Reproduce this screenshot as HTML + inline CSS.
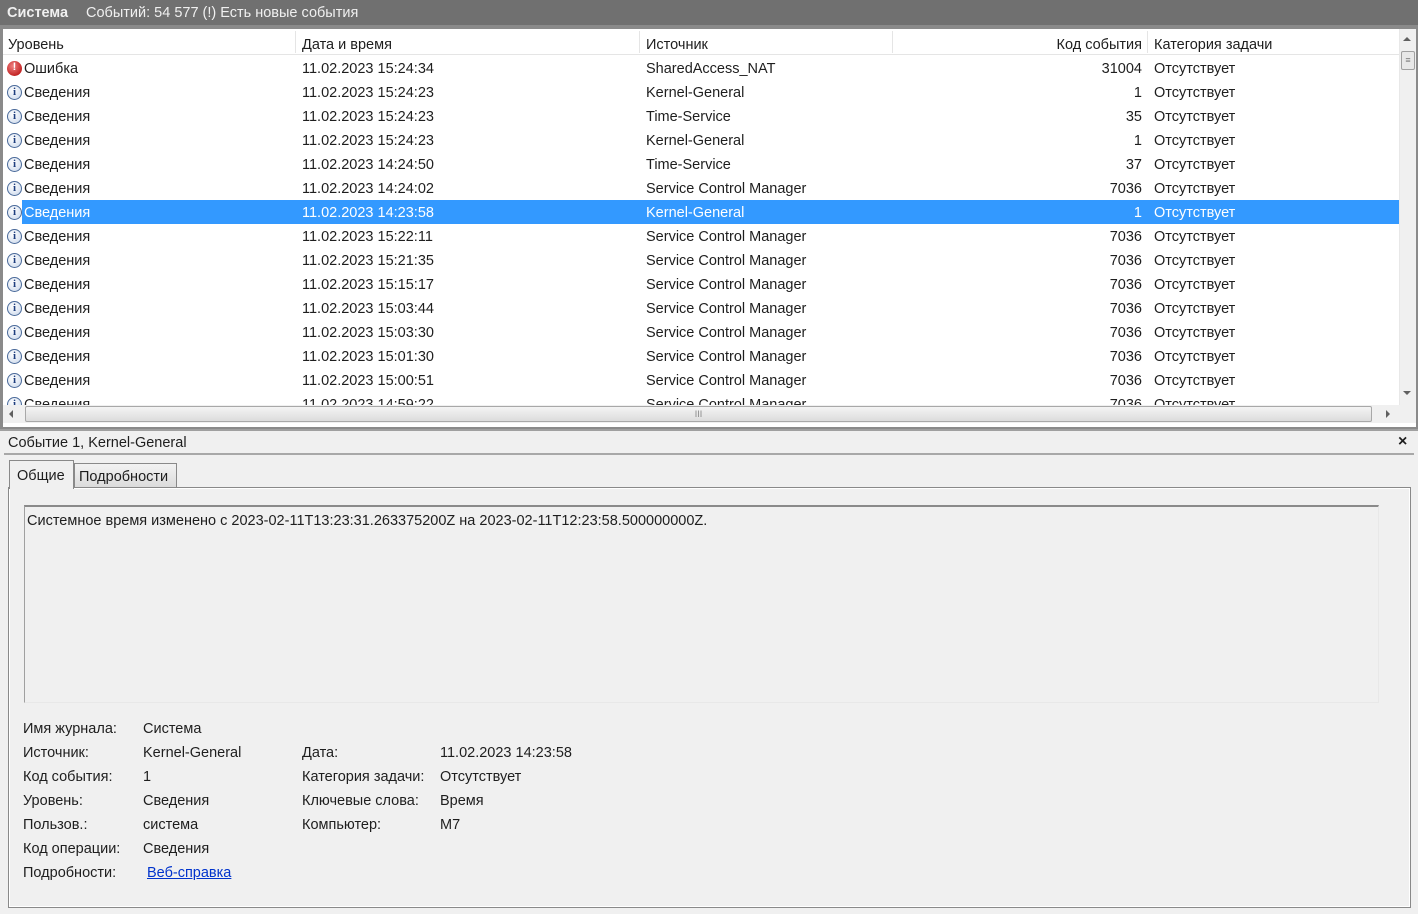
<!DOCTYPE html>
<html><head><meta charset="utf-8"><style>
*{margin:0;padding:0;box-sizing:border-box}
body{width:1418px;height:914px;background:#f0f0f0;font-family:"Liberation Sans","DejaVu Sans",sans-serif;font-size:14.5px;color:#1e1e1e;position:relative;overflow:hidden}
.a{position:absolute;white-space:nowrap}
#title{left:0;top:0;width:1418px;height:25px;background:#707070;color:#f0f0f0;}
#frame{left:0;top:25px;width:1418px;height:404px;background:#8a8a8a}
#list{left:3px;top:29px;width:1413px;height:398px;background:#fff;overflow:hidden}
.hdr{top:2px;height:24px;border-bottom:1px solid #e5e5e5;width:1396px;left:0}
.sep{top:2px;width:1px;height:22px;background:#e5e5e5}
.row{left:0;width:1396px;height:24px}
.row span{position:absolute;top:5px}
.sel{background:#3399ff;color:#fff}
.ic{position:absolute;left:4px;top:5px;width:15px;height:15px;border-radius:50%;font:bold 11px "Liberation Serif",serif;text-align:center;line-height:13px}
.info{border:1px solid #4a6a9a;background:radial-gradient(circle at 40% 35%,#fff,#c8d6ea);color:#1f3f7f}
.err{background:radial-gradient(circle at 40% 35%,#f08080,#b00000);color:#fff;font-family:"Liberation Sans",sans-serif}
</style></head><body>
<div class="a" id="title"><span class="a" style="left:7px;top:5px;font-weight:bold">Система</span><span class="a" style="left:86px;top:5px">Событий: 54 577 (!) Есть новые события</span></div>
<div class="a" id="frame"></div>
<div class="a" id="list">
<div class="a hdr"><span class="a" style="left:5px;top:6px">Уровень</span><span class="a" style="left:299px;top:6px">Дата и время</span><span class="a" style="left:643px;top:6px">Источник</span><span class="a" style="right:257px;top:6px">Код события</span><span class="a" style="left:1151px;top:6px">Категория задачи</span></div>
<div class="a sep" style="left:292px"></div><div class="a sep" style="left:636px"></div><div class="a sep" style="left:889px"></div><div class="a sep" style="left:1144px"></div>
<div id="rows"></div>
<div class="a" style="left:1396px;top:0;width:17px;height:376px;background:#f0f0f0;border-left:1px solid #e8e8e8"></div>
<div class="a" style="left:1400px;top:8px;width:0;height:0;border:4px solid transparent;border-bottom:4px solid #606060;border-top:0"></div>
<div class="a" style="left:1398px;top:22px;width:14px;height:19px;background:#e8e8e8;border:1px solid #a0a0a0;border-radius:2px;font-size:9px;text-align:center;line-height:16px;color:#777">≡</div>
<div class="a" style="left:1400px;top:362px;width:0;height:0;border:4px solid transparent;border-top:4px solid #606060;border-bottom:0"></div>
<div class="a" style="left:0;top:376px;width:1413px;height:18px;background:#f0f0f0"></div>
<div class="a" style="left:6px;top:381px;width:0;height:0;border:4px solid transparent;border-right:4px solid #606060;border-left:0"></div>
<div class="a" style="left:22px;top:377px;width:1347px;height:16px;background:linear-gradient(#f4f4f4,#dcdcdc);border:1px solid #a8a8a8;border-radius:2px;text-align:center;font-size:9px;color:#888;line-height:14px">III</div>
<div class="a" style="left:1383px;top:381px;width:0;height:0;border:4px solid transparent;border-left:4px solid #606060;border-right:0"></div>
</div>
<div class="a" style="left:0;top:429px;width:1418px;height:2px;background:#a0a0a0"></div>
<span class="a" style="left:8px;top:435px">Событие 1, Kernel-General</span>
<span class="a" style="left:1398px;top:433px;font-weight:bold;font-size:16px">×</span>
<div class="a" style="left:4px;top:453px;width:1410px;height:2px;background:#a8a8a8"></div>
<div class="a" style="left:8px;top:487px;width:1403px;height:421px;border:1px solid #898989;box-shadow:inset 0 0 0 1px #fff"></div>
<div class="a" style="left:74px;top:463px;width:103px;height:25px;border:1px solid #898989;background:linear-gradient(#f2f2f2,#dcdcdc)"><span class="a" style="left:4px;top:5px">Подробности</span></div>
<div class="a" style="left:9px;top:460px;width:65px;height:29px;border:1px solid #898989;border-bottom:none;background:#f0f0f0"><span class="a" style="left:7px;top:7px">Общие</span></div>
<div class="a" style="left:24px;top:505px;width:1355px;height:198px;border:1px solid #a0a0a0;border-top:2px solid #8a8a8a;border-right-color:#e8e8e8;border-bottom-color:#e8e8e8"><span class="a" style="left:2px;top:6px">Системное время изменено с 2023-02-11T13:23:31.263375200Z на 2023-02-11T12:23:58.500000000Z.</span></div>
<div id="props"></div>
<script>
var d=[["e","Ошибка","11.02.2023 15:24:34","SharedAccess_NAT","31004"],
["i","Сведения","11.02.2023 15:24:23","Kernel-General","1"],
["i","Сведения","11.02.2023 15:24:23","Time-Service","35"],
["i","Сведения","11.02.2023 15:24:23","Kernel-General","1"],
["i","Сведения","11.02.2023 14:24:50","Time-Service","37"],
["i","Сведения","11.02.2023 14:24:02","Service Control Manager","7036"],
["s","Сведения","11.02.2023 14:23:58","Kernel-General","1"],
["i","Сведения","11.02.2023 15:22:11","Service Control Manager","7036"],
["i","Сведения","11.02.2023 15:21:35","Service Control Manager","7036"],
["i","Сведения","11.02.2023 15:15:17","Service Control Manager","7036"],
["i","Сведения","11.02.2023 15:03:44","Service Control Manager","7036"],
["i","Сведения","11.02.2023 15:03:30","Service Control Manager","7036"],
["i","Сведения","11.02.2023 15:01:30","Service Control Manager","7036"],
["i","Сведения","11.02.2023 15:00:51","Service Control Manager","7036"],
["i","Сведения","11.02.2023 14:59:22","Service Control Manager","7036"]];
var h="";d.forEach(function(r,i){var t=27+i*24;var s=r[0]=="s";
h+='<div class="a row" style="top:'+t+'px">'+(s?'<div class="a sel" style="left:19px;top:0;width:1377px;height:24px"></div>':'')+
'<div class="ic '+(r[0]=="e"?'err">!':'info">i')+'</div>'+
'<span style="left:21px'+(s?';color:#fff':'')+'">'+r[1]+'</span><span style="left:299px'+(s?';color:#fff':'')+'">'+r[2]+'</span><span style="left:643px'+(s?';color:#fff':'')+'">'+r[3]+'</span><span style="right:257px'+(s?';color:#fff':'')+'">'+r[4]+'</span><span style="left:1151px'+(s?';color:#fff':'')+'">Отсутствует</span></div>';});
document.getElementById("rows").innerHTML=h;
var p=[[23,721,"Имя журнала:"],[143,721,"Система"],[23,745,"Источник:"],[143,745,"Kernel-General"],[302,745,"Дата:"],[440,745,"11.02.2023 14:23:58"],
[23,769,"Код события:"],[143,769,"1"],[302,769,"Категория задачи:"],[440,769,"Отсутствует"],[23,793,"Уровень:"],[143,793,"Сведения"],[302,793,"Ключевые слова:"],[440,793,"Время"],
[23,817,"Пользов.:"],[143,817,"система"],[302,817,"Компьютер:"],[440,817,"M7"],[23,841,"Код операции:"],[143,841,"Сведения"],[23,865,"Подробности:"]];
var q="";p.forEach(function(x){q+='<span class="a" style="left:'+x[0]+'px;top:'+x[1]+'px">'+x[2]+'</span>';});
q+='<span class="a" style="left:147px;top:865px;color:#0033cc;text-decoration:underline">Веб-справка </span>';
document.getElementById("props").innerHTML=q;
</script>
</body></html>
